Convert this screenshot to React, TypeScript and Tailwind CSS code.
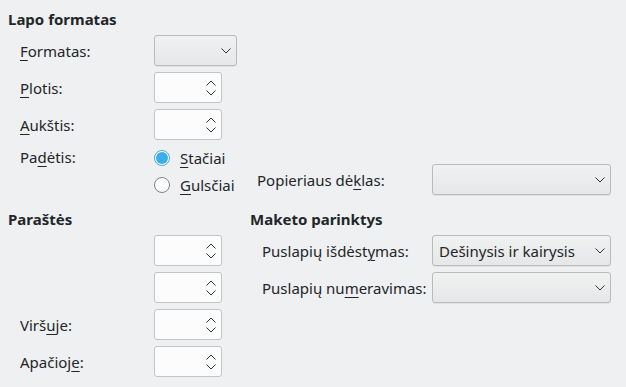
import React from 'react';

const Chevron = ({ up = false }: { up?: boolean }) => (
  <svg width="10" height="6" viewBox="0 0 10 6" className="block">
    <path
      d={up ? 'M0.5 5.5 L5 1 L9.5 5.5' : 'M0.5 0.5 L5 5 L9.5 0.5'}
      fill="none"
      stroke="#31363b"
      strokeWidth="1"
    />
  </svg>
);

// Mnemonic underline, as Qt draws it
const M = ({ children }: { children: React.ReactNode }) => (
  <span className="underline decoration-1 underline-offset-[3px]">{children}</span>
);

const Combo = ({ width, value }: { width: string; value?: string }) => (
  <div
    className={`${width} flex h-[31px] items-center justify-between rounded-[3px] border border-[#b9babb] bg-gradient-to-b from-[#f0f1f1] to-[#e6e7e8] pl-[6px] pr-[5px] shadow-[0_1px_0_rgba(0,0,0,0.06)]`}
  >
    <span>{value}</span>
    <Chevron />
  </div>
);

const Spin = () => (
  <div className="flex h-[31px] w-[68px] items-center justify-end rounded-[3px] border border-[#c3c4c5] bg-[#fcfcfc] pr-[5px]">
    <div className="flex flex-col gap-[4px]">
      <Chevron up />
      <Chevron />
    </div>
  </div>
);

const Radio = ({ checked, children }: { checked?: boolean; children: React.ReactNode }) => (
  <div className="flex h-[22px] items-center gap-[10px]">
    {checked ? (
      <div className="flex h-[16px] w-[16px] items-center justify-center rounded-full border border-[#3daee9] bg-white">
        <div className="h-[12px] w-[12px] rounded-full bg-[#3daee9]" />
      </div>
    ) : (
      <div className="h-[16px] w-[16px] rounded-full border border-[#7f8284] bg-[#fcfcfc]" />
    )}
    <span>{children}</span>
  </div>
);

const Row = ({ label, children, labelWidth = 'w-[134px]' }: { label?: React.ReactNode; children: React.ReactNode; labelWidth?: string }) => (
  <div className="flex h-[31px] items-center">
    <div className={labelWidth}>{label}</div>
    {children}
  </div>
);

export default function App() {
  return (
    <div
      className="h-[387px] w-[626px] overflow-hidden bg-[#eff0f1] pl-[8px] pt-[9px] text-[15px] leading-[20px] text-[#232629]"
      style={{ fontFamily: '"Noto Sans", "DejaVu Sans", sans-serif' }}
    >
      {/* Lapo formatas */}
      <div className="font-bold">Lapo formatas</div>
      <div className="mt-[6px] flex flex-col gap-[6px] pl-[12px]">
        <Row label={<><M>F</M>ormatas:</>}>
          <Combo width="w-[83px]" />
        </Row>
        <Row label={<><M>P</M>lotis:</>}>
          <Spin />
        </Row>
        <Row label={<><M>A</M>ukštis:</>}>
          <Spin />
        </Row>
        <div className="flex">
          <div className="w-[134px] pt-[1px]">
            Pa<M>d</M>ėtis:
          </div>
          <div className="flex w-[103px] flex-col gap-[5px] pt-[1px]">
            <Radio checked>
              <M>S</M>tačiai
            </Radio>
            <Radio>
              <M>G</M>ulsčiai
            </Radio>
          </div>
          <div className="flex items-end pb-[1px]">
            <div className="flex h-[31px] items-center">
              <div className="w-[175px]">
                Popieriaus dė<M>k</M>las:
              </div>
              <Combo width="w-[179px]" />
            </div>
          </div>
        </div>
      </div>

      {/* Paraštės + Maketo parinktys */}
      <div className="mt-[13px] flex">
        <div className="w-[242px]">
          <div className="font-bold">Paraštės</div>
          <div className="mt-[6px] flex flex-col gap-[6px] pl-[12px]">
            <Row>
              <Spin />
            </Row>
            <Row>
              <Spin />
            </Row>
            <Row label={<>Virš<M>u</M>je:</>}>
              <Spin />
            </Row>
            <Row label={<>Apačioj<M>e</M>:</>}>
              <Spin />
            </Row>
          </div>
        </div>
        <div>
          <div className="font-bold">Maketo parinktys</div>
          <div className="mt-[6px] flex flex-col gap-[6px] pl-[12px]">
            <Row labelWidth="w-[170px]" label={<>Puslapių išdėst<M>y</M>mas:</>}>
              <Combo width="w-[179px]" value="Dešinysis ir kairysis" />
            </Row>
            <Row labelWidth="w-[170px]" label={<>Puslapių nu<M>m</M>eravimas:</>}>
              <Combo width="w-[179px]" />
            </Row>
          </div>
        </div>
      </div>
    </div>
  );
}
